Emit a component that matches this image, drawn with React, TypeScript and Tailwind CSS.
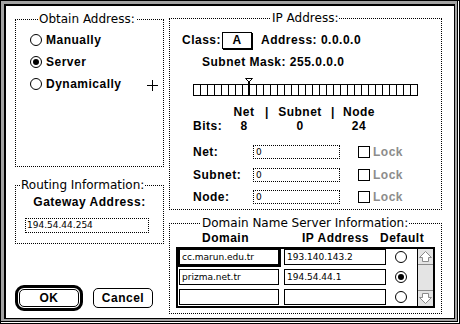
import React from 'react';

const chicago = "font-['Liberation_Sans',Arial,sans-serif] font-bold text-[12px] tracking-[0.5px] leading-none whitespace-nowrap";
const geneva = "font-['DejaVu_Sans',sans-serif] text-[12px] leading-[14px] whitespace-nowrap";
const small = "font-['DejaVu_Sans',sans-serif] text-[9px] leading-none whitespace-nowrap";

const Group = ({
  title,
  titleClass,
  className,
  children,
}: {
  title: string;
  titleClass: string;
  className: string;
  children?: React.ReactNode;
}) => (
  <div className={`relative border border-dotted border-black ${className}`}>
    <span className={`absolute -top-[8px] bg-white px-px ${geneva} ${titleClass}`}>{title}</span>
    {children}
  </div>
);

const Radio = ({ on }: { on?: boolean }) => (
  <span className="w-[12px] h-[12px] rounded-full border border-black bg-white flex items-center justify-center shrink-0">
    {on && <span className="w-[6px] h-[6px] rounded-full bg-black" />}
  </span>
);

const Slider = () => (
  <svg width="226" height="20" className="block" shapeRendering="crispEdges">
    <rect x="0.5" y="8.5" width="224" height="11" fill="white" stroke="black" />
    {Array.from({ length: 31 }, (_, i) => (
      <line key={i} x1={7 * (i + 1) + 0.5} y1="9" x2={7 * (i + 1) + 0.5} y2="19" stroke="black" />
    ))}
    <rect x="55" y="6" width="2" height="14" fill="black" />
    <path d="M52.5 2.5 H59.5 L56 6 Z" fill="white" stroke="black" shapeRendering="auto" />
  </svg>
);

const Arrow = ({ down }: { down?: boolean }) => (
  <svg width="15" height="15" viewBox="0 0 15 15" className={down ? 'rotate-180' : ''}>
    <path d="M7.5 2.5 L13.5 8.5 H10.5 V12.5 H4.5 V8.5 H1.5 Z" fill="white" stroke="#8a8a8a" />
  </svg>
);

const FieldRow = ({ label }: { label: string }) => (
  <div className="flex h-[16px] items-center pl-[23px]">
    <span className={`w-[60px] ${chicago}`}>{label}</span>
    <div className="w-[87px] h-[14px] border border-dotted border-black flex items-center pl-[2px]">
      <span className={small}>0</span>
    </div>
    <span className="ml-[18px] w-[12px] h-[12px] border border-black" />
    <span className={`ml-[3px] text-[#8c8c8c] ${chicago}`}>Lock</span>
  </div>
);

const DnsRow = ({ domain, ip, on, selected }: { domain: string; ip: string; on?: boolean; selected?: boolean }) => (
  <div className="flex h-[16px] items-center">
    <div
      className={`w-[100px] h-[16px] border border-black bg-white flex items-center pl-[2px] ${selected ? 'ring-2 ring-black' : ''}`}
    >
      <span className={small}>{domain}</span>
    </div>
    <div className="ml-[5px] w-[102px] h-[16px] border border-black flex items-center pl-[2px]">
      <span className={small}>{ip}</span>
    </div>
    <span className="ml-[9px]">
      <Radio on={on} />
    </span>
  </div>
);

export default function App() {
  return (
    <div className="w-[460px] h-[324px] bg-white border border-black pr-px pb-px">
      <div className="w-full h-full border-r border-b border-black">
        <div className="w-full h-full border-[3px] border-r-2 border-b-2 border-[#a3a3a3]">
          <div className="w-full h-full bg-white border-2 border-r border-b border-black flex items-start gap-[5px] pl-[9px]">
            {/* left column */}
            <div className="w-[149px] pt-[13px] flex flex-col">
              <Group title="Obtain Address:" titleClass="left-[22px]" className="h-[148px] pt-[9px] pl-[14px]">
                <div className="flex h-[22px] items-center gap-[4px]">
                  <Radio />
                  <span className={chicago}>Manually</span>
                </div>
                <div className="flex h-[22px] items-center gap-[4px]">
                  <Radio on />
                  <span className={chicago}>Server</span>
                </div>
                <div className="flex h-[22px] items-center gap-[4px]">
                  <Radio />
                  <span className={chicago}>Dynamically</span>
                </div>
                <svg width="11" height="11" className="absolute left-[131px] top-[60px]">
                  <line x1="5.5" y1="0" x2="5.5" y2="11" stroke="black" />
                  <line x1="0" y1="5.5" x2="11" y2="5.5" stroke="black" />
                </svg>
              </Group>

              <Group title="Routing Information:" titleClass="left-[4px]" className="mt-[18px] h-[59px] pt-[8px]">
                <div className={`h-[16px] flex items-center justify-center ${chicago}`}>Gateway Address:</div>
                <div className="mt-[8px] ml-[9px] w-[124px] h-[15px] border border-dotted border-black flex items-center pl-px">
                  <span className={small}>194.54.44.254</span>
                </div>
              </Group>

              <div className="mt-[41px] flex items-center">
                <div className="w-[68px] h-[26px] border-[3px] border-black rounded-[9px] p-px">
                  <div className={`w-full h-full border border-black rounded-[5px] flex items-center justify-center ${chicago}`}>
                    OK
                  </div>
                </div>
                <div
                  className={`ml-[10px] w-[60px] h-[20px] border border-black rounded-[5px] flex items-center justify-center ${chicago}`}
                >
                  Cancel
                </div>
              </div>
            </div>

            {/* right column */}
            <div className="w-[273px] pt-[12px] flex flex-col">
              <Group title="IP Address:" titleClass="left-[101px]" className="h-[192px] flex flex-col">
                <div className={`mt-[11px] h-[20px] flex items-center pl-[12px] ${chicago}`}>
                  <span>Class:</span>
                  <span className="ml-px w-[30px] h-[17px] border border-black shadow-[1px_1px_0_#000] flex items-center justify-center">
                    A
                  </span>
                  <span className="ml-[9px]">Address: 0.0.0.0</span>
                </div>
                <div className={`mt-[2px] h-[20px] flex items-center pl-[32px] ${chicago}`}>Subnet Mask: 255.0.0.0</div>
                <div className="mt-[4px] pl-[23px]">
                  <Slider />
                </div>
                <div className={`mt-[9px] flex h-[14px] items-center pl-[23px] ${chicago}`}>
                  <span className="w-[33px]" />
                  <span className="w-[36px] text-center">Net</span>
                  <span className="w-[10px] text-center">|</span>
                  <span className="w-[56px] text-center">Subnet</span>
                  <span className="w-[10px] text-center">|</span>
                  <span className="w-[42px] text-center">Node</span>
                </div>
                <div className={`flex h-[14px] items-center pl-[23px] ${chicago}`}>
                  <span className="w-[33px]">Bits:</span>
                  <span className="w-[36px] text-center">8</span>
                  <span className="w-[10px]" />
                  <span className="w-[56px] text-center">0</span>
                  <span className="w-[10px]" />
                  <span className="w-[42px] text-center">24</span>
                </div>
                <div className="mt-[11px]">
                  <FieldRow label="Net:" />
                </div>
                <div className="mt-[7px]">
                  <FieldRow label="Subnet:" />
                </div>
                <div className="mt-[6px]">
                  <FieldRow label="Node:" />
                </div>
              </Group>

              <Group
                title="Domain Name Server Information:"
                titleClass="left-[31px]"
                className="mt-[13px] h-[91px] flex flex-col"
              >
                <div className={`mt-[7px] h-[14px] flex items-center ${chicago}`}>
                  <span className="w-[132px] pl-[32px]">Domain</span>
                  <span className="w-[78px]">IP Address</span>
                  <span>Default</span>
                </div>
                <div className="mt-[2px] ml-[6px] w-[259px] h-[61px] border-2 border-black flex">
                  <div className="flex-1 flex flex-col gap-[4px] pl-px">
                    <DnsRow domain="cc.marun.edu.tr" ip="193.140.143.2" selected />
                    <DnsRow domain="prizma.net.tr" ip="194.54.44.1" on />
                    <DnsRow domain="" ip="" />
                  </div>
                  <div className="w-[16px] h-full border-l border-black bg-[#e4e4e4] flex flex-col justify-between">
                    <div className="h-[16px] border-b border-[#8a8a8a] flex items-center justify-center">
                      <Arrow />
                    </div>
                    <div className="h-[16px] border-t border-[#8a8a8a] flex items-center justify-center">
                      <Arrow down />
                    </div>
                  </div>
                </div>
              </Group>
            </div>
          </div>
        </div>
      </div>
    </div>
  );
}
